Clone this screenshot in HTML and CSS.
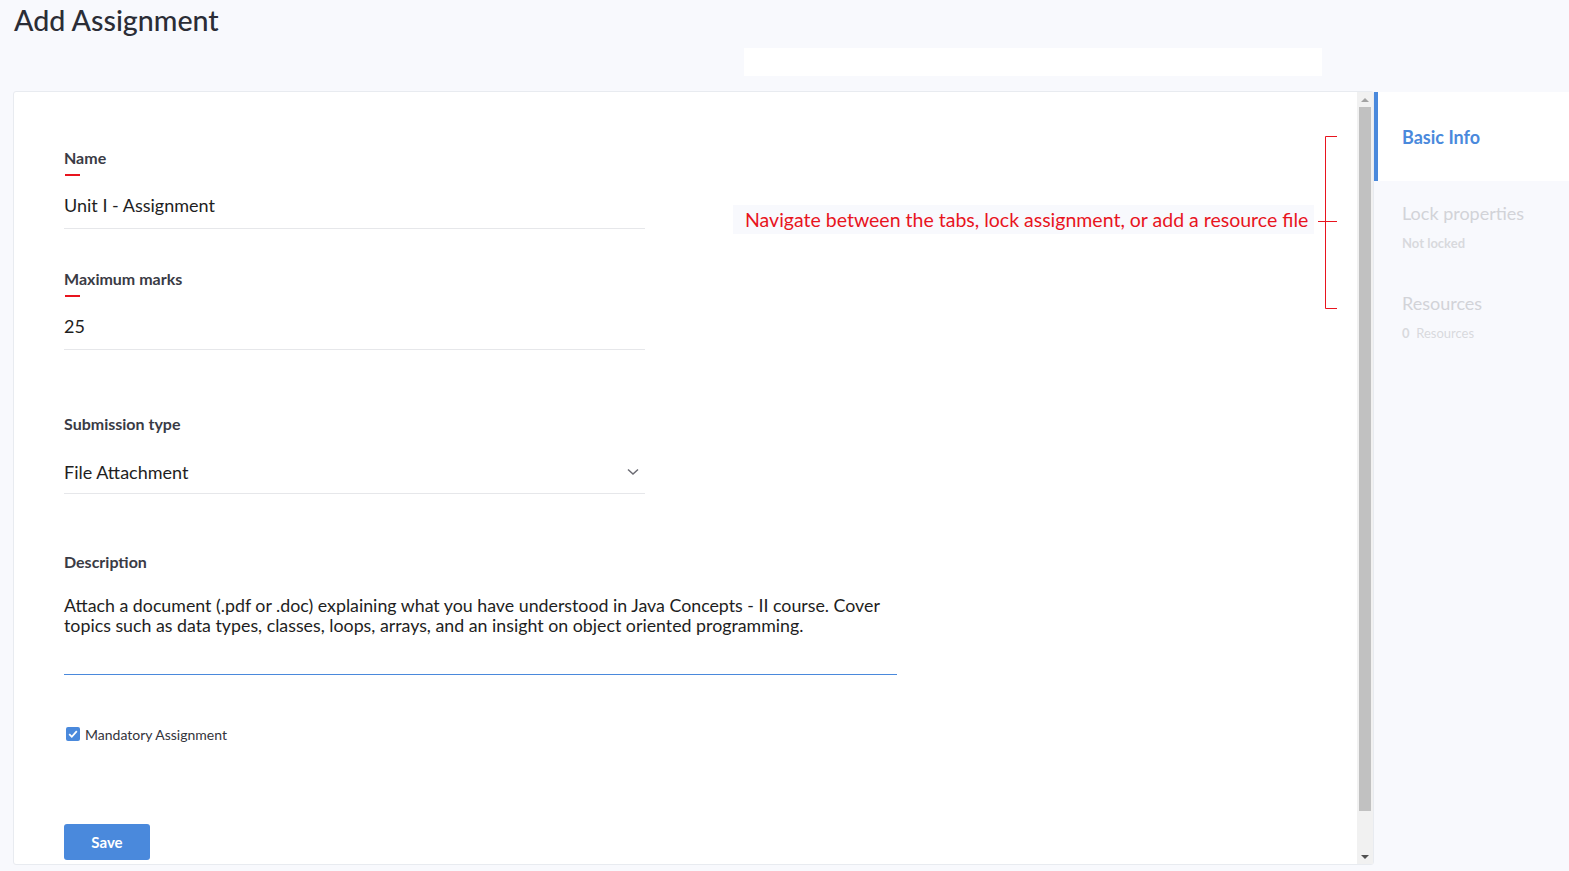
FILE: index.html
```html
<!DOCTYPE html>
<html lang="en">
<head>
<meta charset="utf-8">
<title>Add Assignment</title>
<link rel="stylesheet" href="styles.css">
</head>
<body>
<header class="top">
  <h1 class="title">Add Assignment</h1>
  <div class="search-slot"></div>
</header>
<main class="layout">
  <section class="card">
    <div class="card-body">
      <form class="form">
        <div class="field">
          <div class="field-label">Name</div>
          <div class="req-dash"></div>
          <div class="field-input">Unit I - Assignment</div>
        </div>
        <div class="field">
          <div class="field-label">Maximum marks</div>
          <div class="req-dash"></div>
          <div class="field-input">25</div>
        </div>
        <div class="field field-select">
          <div class="field-label">Submission type</div>
          <div class="field-input select-input">
            <span>File Attachment</span>
            <svg class="chevron" width="12" height="8" viewBox="0 0 12 8"><path d="M1 1.5 L6 6 L11 1.5" fill="none" stroke="#6b6b73" stroke-width="1.5"/></svg>
          </div>
        </div>
        <div class="field field-desc">
          <div class="field-label">Description</div>
          <div class="desc-input">Attach a document (.pdf or .doc) explaining what you have understood in Java Concepts - II course. Cover<br>topics such as data types, classes, loops, arrays, and an insight on object oriented programming.</div>
        </div>
        <label class="check-row">
          <span class="check-box"><svg width="14" height="14" viewBox="0 0 14 14"><path d="M3.2 7.2 L5.8 9.8 L10.8 4.2" fill="none" stroke="#fff" stroke-width="1.8"/></svg></span>
          <span class="check-text">Mandatory Assignment</span>
        </label>
        <button type="button" class="save-btn">Save</button>
      </form>
      <div class="annotation">Navigate between the tabs, lock assignment, or add a resource file</div>
      <svg class="bracket" width="20" height="174" viewBox="0 0 20 174"><path d="M19 0.5 H7.5 V172.5 H19 M0 85.5 H19" fill="none" stroke="#e8141e" stroke-width="1"/></svg>
    </div>
    <div class="scrollbar">
      <div class="sb-btn"><span class="tri-up"></span></div>
      <div class="sb-thumb"></div>
      <div class="sb-space"></div>
      <div class="sb-btn"><span class="tri-down"></span></div>
    </div>
  </section>
  <nav class="tabs">
    <div class="tab tab-active"><div class="tab-title">Basic Info</div></div>
    <div class="tab">
      <div class="tab-title">Lock properties</div>
      <div class="tab-sub"><b>Not locked</b></div>
    </div>
    <div class="tab">
      <div class="tab-title">Resources</div>
      <div class="tab-sub"><b>0</b>&nbsp; Resources</div>
    </div>
  </nav>
</main>
</body>
</html>
```

FILE: styles.css
```css
* { box-sizing: border-box; }
html, body { margin: 0; padding: 0; }
body {
  background: #f8f9fd;
  font-family: Lato, "Open Sans", sans-serif;
  color: #222;
  width: 1569px;
  height: 871px;
  overflow: hidden;
}
.top {
  height: 91px;
  display: flex;
  flex-direction: column;
}
.title {
  margin: 0;
  padding: 3px 0 0 14px;
  font-size: 28.6px;
  line-height: 34px;
  font-weight: 500;
  color: #2b2d36;
}
.search-slot {
  margin: 11px 0 0 744px;
  width: 578px;
  height: 28px;
  background: #fff;
}
.layout {
  display: flex;
  padding-left: 13px;
}
.card {
  width: 1361px;
  height: 774px;
  background: #fff;
  border: 1px solid #e8ebf0;
  border-radius: 3px;
  display: flex;
}
.card-body {
  flex: 1;
  position: relative;
}
.form {
  padding: 57px 0 0 50px;
  display: flex;
  flex-direction: column;
  align-items: flex-start;
}
.field { width: 581px; margin-bottom: 41px; }
.field-select { margin-top: 24px; margin-bottom: 59px; }
.field-desc { width: 833px; margin-bottom: 52px; }
.field-label {
  font-size: 16px;
  line-height: 18px;
  font-weight: 700;
  color: #3a3b45;
}
.req-dash {
  width: 15px;
  height: 2px;
  margin: 7px 0 0 1px;
  background: #e8141e;
}
.field-input {
  margin-top: 17px;
  font-size: 18px;
  line-height: 24px;
  padding-bottom: 11px;
  border-bottom: 1px solid #e6e7ea;
  color: #1e1e22;
}
.select-input {
  margin-top: 27px;
  padding-bottom: 9px;
  display: flex;
  justify-content: space-between;
  align-items: center;
}
.chevron { margin-right: 6px; }
.desc-input {
  margin-top: 24px;
  font-size: 17.8px;
  line-height: 20px;
  color: #1e1e22;
  padding-bottom: 39px;
  border-bottom: 1px solid #4a89dc;
}
.check-row {
  display: flex;
  align-items: center;
  gap: 5px;
  margin-left: 2px;
  height: 14px;
}
.check-box {
  width: 14px;
  height: 14px;
  border-radius: 2px;
  background: #4a89dc;
  display: flex;
}
.check-text {
  font-size: 14px;
  color: #33343c;
}
.save-btn {
  margin-top: 83px;
  width: 86px;
  height: 36px;
  border: 0;
  border-radius: 3px;
  background: #4a89dc;
  color: #fff;
  font-family: Lato, sans-serif;
  font-weight: 700;
  font-size: 15px;
  padding: 0;
}
.annotation {
  position: absolute;
  left: 719px;
  top: 113px;
  width: 581px;
  height: 29px;
  background: #f8f9fd;
  color: #e8141e;
  font-family: Lato, sans-serif;
  font-size: 19.5px;
  line-height: 29px;
  padding-left: 12px;
  white-space: nowrap;
}
.bracket {
  position: absolute;
  left: 1304px;
  top: 44px;
}
.scrollbar {
  width: 16px;
  background: #f1f1f1;
  display: flex;
  flex-direction: column;
  align-items: center;
}
.sb-btn {
  height: 15px;
  width: 16px;
  display: flex;
  align-items: center;
  justify-content: center;
}
.tri-up {
  width: 0; height: 0;
  border-left: 4px solid transparent;
  border-right: 4px solid transparent;
  border-bottom: 4px solid #a3a3a3;
}
.tri-down {
  width: 0; height: 0;
  border-left: 4px solid transparent;
  border-right: 4px solid transparent;
  border-top: 4px solid #505050;
}
.sb-thumb {
  width: 12px;
  height: 704px;
  background: #c1c1c1;
}
.sb-space { flex: 1; }
.tabs {
  width: 195px;
  margin-top: 1px;
  display: flex;
  flex-direction: column;
}
.tab {
  height: 90px;
  padding-left: 28px;
}
.tab-active {
  height: 89px;
  background: #fff;
  border-left: 4px solid #4a89dc;
  padding-left: 24px;
  display: flex;
  align-items: center;
}
.tab-title {
  font-size: 18px;
  line-height: 22px;
  color: #d2d3d8;
  margin-top: 21px;
}
.tab-active .tab-title {
  margin-top: 0;
  color: #4a89dc;
  font-weight: 700;
}
.tab-sub {
  margin-top: 11px;
  font-size: 13px;
  line-height: 16px;
  color: #d8d9dd;
}
.tab-sub b { font-weight: 700; }
```
